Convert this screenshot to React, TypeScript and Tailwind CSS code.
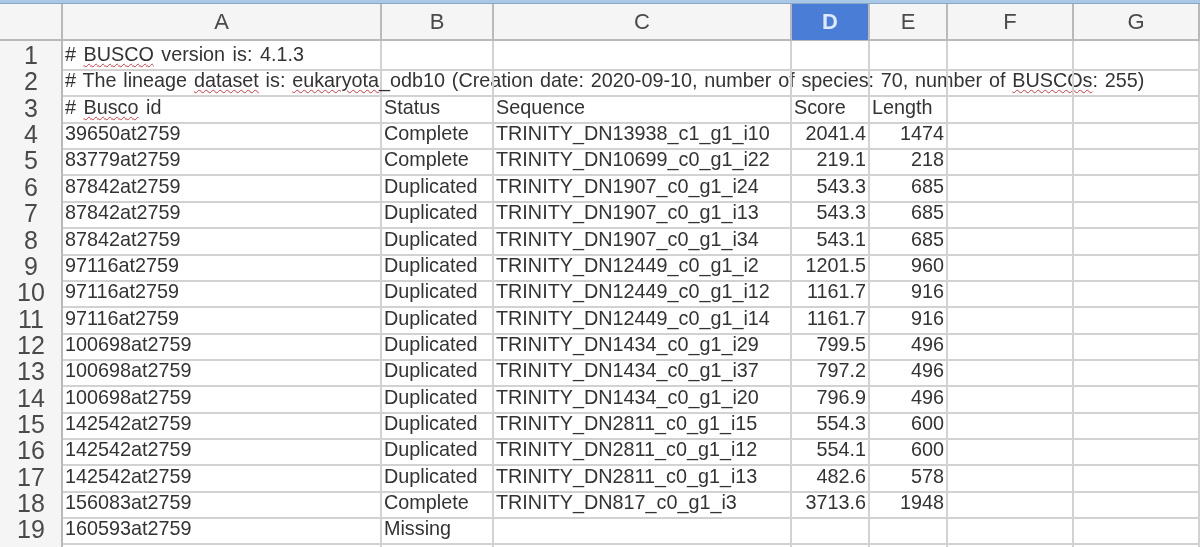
const columns = ['A', 'B', 'C', 'D', 'E', 'F', 'G'];

const rows: [string, string, string, string, string][] = [
  ['39650at2759', 'Complete', 'TRINITY_DN13938_c1_g1_i10', '2041.4', '1474'],
  ['83779at2759', 'Complete', 'TRINITY_DN10699_c0_g1_i22', '219.1', '218'],
  ['87842at2759', 'Duplicated', 'TRINITY_DN1907_c0_g1_i24', '543.3', '685'],
  ['87842at2759', 'Duplicated', 'TRINITY_DN1907_c0_g1_i13', '543.3', '685'],
  ['87842at2759', 'Duplicated', 'TRINITY_DN1907_c0_g1_i34', '543.1', '685'],
  ['97116at2759', 'Duplicated', 'TRINITY_DN12449_c0_g1_i2', '1201.5', '960'],
  ['97116at2759', 'Duplicated', 'TRINITY_DN12449_c0_g1_i12', '1161.7', '916'],
  ['97116at2759', 'Duplicated', 'TRINITY_DN12449_c0_g1_i14', '1161.7', '916'],
  ['100698at2759', 'Duplicated', 'TRINITY_DN1434_c0_g1_i29', '799.5', '496'],
  ['100698at2759', 'Duplicated', 'TRINITY_DN1434_c0_g1_i37', '797.2', '496'],
  ['100698at2759', 'Duplicated', 'TRINITY_DN1434_c0_g1_i20', '796.9', '496'],
  ['142542at2759', 'Duplicated', 'TRINITY_DN2811_c0_g1_i15', '554.3', '600'],
  ['142542at2759', 'Duplicated', 'TRINITY_DN2811_c0_g1_i12', '554.1', '600'],
  ['142542at2759', 'Duplicated', 'TRINITY_DN2811_c0_g1_i13', '482.6', '578'],
  ['156083at2759', 'Complete', 'TRINITY_DN817_c0_g1_i3', '3713.6', '1948'],
  ['160593at2759', 'Missing', '', '', ''],
];

const cols = 'grid grid-cols-[63px_319px_112px_298px_78px_78px_126px_126px]';
const rowH = 'h-[26.37px]';
const cell = 'border-r-2 border-b-2 border-[#d2d2d2] px-[2px] whitespace-nowrap leading-[27px] min-w-0';

function Bad({ children }: { children: React.ReactNode }) {
  return <span className="underline decoration-wavy decoration-[#d9363e] decoration-1 underline-offset-2">{children}</span>;
}

function RowHead({ n }: { n: number }) {
  return (
    <div className="border-r-2 border-b-2 border-[#b9b9b9] bg-[#f5f5f5] pl-px text-center text-[25px] leading-[28px] text-[#4a4a4a]">
      {n}
    </div>
  );
}

function TextRow({ n, a, b, c, d, e }: { n: number; a: string; b: string; c: string; d: string; e: string }) {
  return (
    <div className={`${cols} ${rowH}`}>
      <RowHead n={n} />
      <div className={cell}>{a}</div>
      <div className={cell}>{b}</div>
      <div className={cell}>{c}</div>
      <div className={`${cell} text-right`}>{d}</div>
      <div className={`${cell} text-right`}>{e}</div>
      <div className={cell} />
      <div className={cell} />
    </div>
  );
}

export default function App() {
  return (
    <div className="w-[1200px] h-[547px] overflow-hidden bg-white text-[19.8px] text-[#333] blur-[0.4px] font-['Liberation_Sans',sans-serif]">
      <div className="h-[4px] border-b border-[#8aa9c9] bg-[#a9c8e8]" />

      <div className={`${cols} h-[37px] border-b-2 border-[#b9b9b9] bg-[#f5f5f5] text-[22px] leading-[36px] text-[#4a4a4a]`}>
        <div className="border-r-2 border-[#b9b9b9]" />
        {columns.map((c) =>
          c === 'D' ? (
            <div key={c} className="bg-[#4a7ed6] text-center font-bold text-[#dfe9fb] border-r-2 border-[#b9b9b9]">
              {c}
            </div>
          ) : (
            <div key={c} className="text-center border-r-2 border-[#b9b9b9]">
              {c}
            </div>
          ),
        )}
      </div>

      <div className={`${cols} ${rowH}`}>
        <RowHead n={1} />
        <div className={`${cell} [word-spacing:2px]`}># <Bad>BUSCO</Bad> version is: 4.1.3</div>
        <div className={cell} />
        <div className={cell} />
        <div className={cell} />
        <div className={cell} />
        <div className={cell} />
        <div className={cell} />
      </div>

      <div className={`${cols} ${rowH}`}>
        <RowHead n={2} />
        {/* long line spills over the empty cells to its right */}
        <div className={`${cell} border-r-0 [word-spacing:1.3px]`}>
          # The lineage <Bad>dataset</Bad> is: <Bad>eukaryota</Bad>_odb10 (Creation date: 2020-09-10, number of species: 70, number of <Bad>BUSCOs</Bad>: 255)
        </div>
        <div className={`${cell} border-r-0`} />
        <div className={cell} />
        <div className={cell} />
        <div className={cell} />
        <div className={cell} />
        <div className={cell} />
      </div>

      <div className={`${cols} ${rowH}`}>
        <RowHead n={3} />
        <div className={`${cell} [word-spacing:2px]`}># <Bad>Busco</Bad> id</div>
        <div className={cell}>Status</div>
        <div className={cell}>Sequence</div>
        <div className={cell}>Score</div>
        <div className={cell}>Length</div>
        <div className={cell} />
        <div className={cell} />
      </div>

      {rows.map(([a, b, c, d, e], i) => (
        <TextRow key={i} n={i + 4} a={a} b={b} c={c} d={d} e={e} />
      ))}

      <div className={`${cols} ${rowH}`}>
        <div className="border-r-2 border-[#b9b9b9] bg-[#f5f5f5]" />
        <div className="border-r-2 border-[#d2d2d2]" />
        <div className="border-r-2 border-[#d2d2d2]" />
        <div className="border-r-2 border-[#d2d2d2]" />
        <div className="border-r-2 border-[#d2d2d2]" />
        <div className="border-r-2 border-[#d2d2d2]" />
        <div className="border-r-2 border-[#d2d2d2]" />
        <div className="border-r-2 border-[#d2d2d2]" />
      </div>
    </div>
  );
}
